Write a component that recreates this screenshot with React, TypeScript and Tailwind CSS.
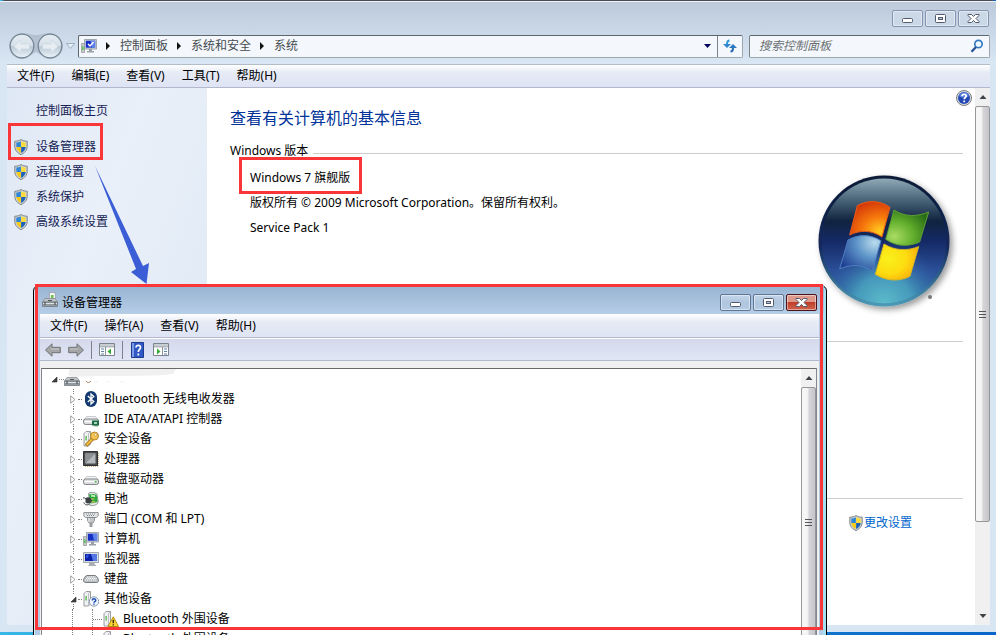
import type { ReactNode } from 'react';

const FONT = "font-['Noto_Sans','Noto_Sans_CJK_SC',sans-serif]";

const MAIN_MENU = ['文件(F)', '编辑(E)', '查看(V)', '工具(T)', '帮助(H)'];
const DEVICE_MENU = ['文件(F)', '操作(A)', '查看(V)', '帮助(H)'];
const CRUMBS = ['控制面板', '系统和安全', '系统'];
const TASKS = ['设备管理器', '远程设置', '系统保护', '高级系统设置'];

/* ---------- Icons ---------- */

function Shield() {
  return (
    <svg viewBox="0 0 14 16" className="w-3.5 h-4 shrink-0" aria-hidden="true">
      <path d="M7 .5C5.500 1.700 3 2.200.8 2.200v5C.8 11.500 3.500 14 7 15.600c3.500-1.600 6.200-4.100 6.200-8.400v-5C11 2.200 8.500 1.700 7 .5z" fill="#cfd3d5" stroke="#7d8488" />
      <path d="M6.900 2.200C5.600 3 4 3.400 2.300 3.500V8h4.600z" fill="#2f86d6" />
      <path d="M7.100 2.200C8.400 3 10 3.400 11.700 3.500V8H7.100z" fill="#fbdc3c" />
      <path d="M2.300 8c.3 2.900 2.100 4.700 4.600 6V8z" fill="#f6c914" />
      <path d="M11.700 8c-.3 2.900-2.100 4.700-4.600 6V8z" fill="#1c62b8" />
    </svg>
  );
}

function ComputerIcon({ check = false }: { check?: boolean }) {
  return (
    <svg viewBox="0 0 16 16" className="w-4 h-4 shrink-0" aria-hidden="true">
      <path d="M.5 5.500h3v9h-3z" fill="#c7cbcf" stroke="#8d9296" strokeWidth=".7" />
      <path d="M1.200 8.500h1.300v3.500H1.200z" fill="#43c336" />
      <path d="M3.500 1.500h12v9.500h-12z" fill="#d4d8dd" stroke="#8e959d" strokeWidth=".8" />
      <path d="M4.800 2.700h9.400v7H4.800z" fill="#1830c4" />
      <path d="M9.500 2.700h4.700v7H11z" fill="#5f84ec" />
      <path d="M8 11h3v2h2v1.500H6V13h2z" fill="#9aa0a6" />
      {check && <path d="M7 6l2 2 3.500-4" fill="none" stroke="#fff" strokeWidth="1.500" />}
    </svg>
  );
}

function MonitorIcon() {
  return (
    <svg viewBox="0 0 16 16" className="w-4 h-4 shrink-0" aria-hidden="true">
      <path d="M.5 1.500h15v10H.5z" fill="#d8dbdf" stroke="#92989e" strokeWidth=".8" />
      <path d="M2 3h12v7H2z" fill="#0b1fa8" />
      <path d="M8 3h6v7h-4z" fill="#5577e6" />
      <path d="M3 3.500h3L5 7H3z" fill="#2d4bd6" />
      <path d="M6 11.500h5l1 2 1.500 1.500H5L6 13.500z" fill="#a9aeb3" />
    </svg>
  );
}

function ToolboxIcon({ card = false }: { card?: boolean }) {
  return (
    <svg viewBox="0 0 16 16" className="w-4 h-4 shrink-0" aria-hidden="true">
      {card && <path d="M7.500.5h5.500l.5 6h-6z" fill="#f6f7f8" stroke="#92979b" strokeWidth=".7" />}
      {card && <path d="M9 3h2.500v3H9z" fill="#6bbf4c" />}
      <path d="M3 6.500h10l2.500 3.500h-15z" fill="#bdc3c7" stroke="#7f868b" strokeWidth=".7" />
      <path d="M.5 10h15v4.500H.5z" fill="#929ba0" stroke="#6b7378" strokeWidth=".7" />
      <path d="M1 11.500h14" stroke="#dfe3e5" />
      <path d="M3 10v3M13 10v3M6 8.500h4" stroke="#4d555a" strokeWidth="1.200" />
    </svg>
  );
}

function BluetoothIcon() {
  return (
    <svg viewBox="0 0 16 16" className="w-4 h-4 shrink-0" aria-hidden="true">
      <rect x="2" y="0" width="12" height="16" rx="6" fill="#12396f" />
      <path d="M4.800 5l6 5.500L8 13V3l2.800 2.500-6 5.500" fill="none" stroke="#fff" strokeWidth="1.300" />
    </svg>
  );
}

function DriveIcon({ card = false }: { card?: boolean }) {
  return (
    <svg viewBox="0 0 16 16" className="w-4 h-4 shrink-0" aria-hidden="true">
      <path d="M3.500 5.500h9L15 9H1z" fill="#f3f4f5" stroke="#b4b8bb" strokeWidth=".7" />
      <rect x=".5" y="8" width="15" height="5.500" rx="2" fill="#dcdee0" stroke="#74797d" strokeWidth=".9" />
      <path d="M2 10.500h9" stroke="#fff" />
      <path d="M12 10h1.500v1.500H12z" fill="#3fbf35" />
      {card && <path d="M9 9.500h7v5h-1.500v1h-1v-1h-1v1h-1v-1H9z" fill="#1f6b45" />}
      {card && <path d="M11 11h3v2h-3z" fill="#a5d8b6" />}
    </svg>
  );
}

function TowerIcon({ children }: { children?: ReactNode }) {
  return (
    <svg viewBox="0 0 16 16" className="w-4 h-4 shrink-0" aria-hidden="true">
      <path d="M1 2.500l2-2h4.500V13l-2 2H1z" fill="#f0f1f2" stroke="#85898d" strokeWidth=".8" />
      <path d="M5.500 2.500V15M5.500 2.500l2-2" stroke="#a5a9ad" strokeWidth=".7" />
      <path d="M2.500 5h1.300v4.500H2.500z" fill="#55b94a" />
      {children}
    </svg>
  );
}

function KeyBadge() {
  return (
    <>
      <path d="M10 7.500L3 14.500" stroke="#9c6c13" strokeWidth="3.500" />
      <path d="M10 7.500L3.500 14" stroke="#f3bd45" strokeWidth="2" />
      <circle cx="11.500" cy="5" r="4" fill="#f6c451" stroke="#a57418" strokeWidth=".8" />
      <circle cx="12.700" cy="3.800" r="1.200" fill="#fff" stroke="#a57418" strokeWidth=".5" />
    </>
  );
}

function QuestionBadge() {
  return (
    <>
      <circle cx="11" cy="10.500" r="4.700" fill="#f3f7fc" stroke="#7c8faa" strokeWidth=".9" />
      <path d="M9.300 9.500c0-2.400 3.600-2.100 3.400.1-.1 1.100-1.700 1.100-1.700 2.100M11 12.500v1.300" fill="none" stroke="#1d4fb0" strokeWidth="1.500" />
    </>
  );
}

function WarningBadge() {
  return (
    <>
      <path d="M10.300 5.800l5.200 9.700H5z" fill="#fbd936" stroke="#b58b09" strokeLinejoin="round" />
      <path d="M10.300 8.800v3.400M10.300 13.200v1.400" stroke="#3f3000" strokeWidth="1.500" />
    </>
  );
}

function ChipIcon() {
  return (
    <svg viewBox="0 0 16 16" className="w-4 h-4 shrink-0" aria-hidden="true">
      <path d="M2 15.300h13M15.300 2v13" stroke="#bfa05a" strokeDasharray="1 1" />
      <path d="M.5.500h14v14H.5z" fill="#4b4d4f" stroke="#2f3133" />
      <path d="M2.500 2.500h10v10h-10z" fill="#b6b9bb" />
      <path d="M2.500 2.500h10l-10 10z" fill="#8d9093" />
    </svg>
  );
}

function BatteryIcon() {
  return (
    <svg viewBox="0 0 16 16" className="w-4 h-4 shrink-0" aria-hidden="true">
      <path d="M5.500 2.500C6 1 12 1 14 3l1.200 8c-.5 3-5 4-8.200 3.500z" fill="#e4e8e5" stroke="#6f7772" strokeWidth=".7" />
      <path d="M6 3.500c3-1 6-.5 7.700.7l1 6.300c-2 1.500-5 2-7.700 1.500z" fill="#2aa83b" />
      <path d="M8 3.800c1.500-.4 3 0 4 .5l.3 2C11 5.500 9.500 5.500 8.200 6z" fill="#c5f0be" />
      <path d="M0 6.800c2 0 2.500 1 3.500 1.500M.8 11.500c1 2.700 3.700 3 5.700 1.500" stroke="#3b3e40" fill="none" />
      <path d="M2.500 7c3-1.500 5.500-.5 6.500 2.500-.5 3-4.500 4-6.500 2z" fill="#3c4042" />
      <path d="M8 8h3.500M8.500 10.800H12" stroke="#e2c368" strokeWidth="1.200" />
    </svg>
  );
}

function PortIcon() {
  return (
    <svg viewBox="0 0 16 16" className="w-4 h-4 shrink-0" aria-hidden="true">
      <path d="M.8 1.500h14.400v3.500L13.500 6.500h-11L.8 5z" fill="#e1e3e4" stroke="#7c8083" strokeWidth=".8" />
      <path d="M3 3h10M4 4.500h8" stroke="#85898c" strokeDasharray="1 1" />
      <path d="M4.500 6.500h7v3L10 12H6L4.500 9.500z" fill="#c3c7c9" stroke="#7c8083" strokeWidth=".8" />
      <path d="M6.500 12h3v4h-3z" fill="#989da0" />
      <path d="M6 7v4" stroke="#eceeef" />
    </svg>
  );
}

function KeyboardIcon() {
  return (
    <svg viewBox="0 0 16 16" className="w-4 h-4 shrink-0" aria-hidden="true">
      <path d="M4 4.500h8c2 .5 3.500 3.500 3.500 5s-1 2-2 2h-11c-1 0-2-.5-2-2s1.500-4.500 3.500-5z" fill="#b9bdc0" stroke="#6c7073" strokeWidth=".9" />
      <path d="M4 6h8.500M3 7.500h10.500M2 9h12" stroke="#fff" strokeDasharray="1.200 .8" />
    </svg>
  );
}

function WindowsLogo() {
  return (
    <svg viewBox="0 0 140 140" className="w-[140px] h-[140px] shrink-0 overflow-visible" role="img" aria-label="Windows">
      <defs>
        <linearGradient id="orb" x1="0" y1="0" x2="0" y2="1">
          <stop offset="0" stopColor="#8fa9b6" />
          <stop offset=".15" stopColor="#516d80" />
          <stop offset=".34" stopColor="#10233f" />
          <stop offset=".5" stopColor="#142a66" />
          <stop offset=".75" stopColor="#2c519b" />
          <stop offset="1" stopColor="#2f78a8" />
        </linearGradient>
        <radialGradient id="orbGlow" cx=".5" cy="1" r=".5">
          <stop offset="0" stopColor="#5dbccb" />
          <stop offset=".45" stopColor="#4aa3c0" stopOpacity=".85" />
          <stop offset="1" stopColor="#2c569f" stopOpacity="0" />
        </radialGradient>
        <linearGradient id="orbRim" x1="0" y1="0" x2="0" y2="1">
          <stop offset="0" stopColor="#0b1a36" />
          <stop offset=".55" stopColor="#14295b" />
          <stop offset="1" stopColor="#4e9cb8" />
        </linearGradient>
        <radialGradient id="flagRed" cx=".75" cy=".85" r=".95">
          <stop offset="0" stopColor="#ffcf1f" />
          <stop offset=".45" stopColor="#f6780c" />
          <stop offset="1" stopColor="#d02f08" />
        </radialGradient>
        <radialGradient id="flagGreen" cx=".2" cy=".75" r=".9">
          <stop offset="0" stopColor="#a9dc63" />
          <stop offset=".5" stopColor="#62ae2c" />
          <stop offset="1" stopColor="#286c16" />
        </radialGradient>
        <radialGradient id="flagBlue" cx=".85" cy=".2" r="1">
          <stop offset="0" stopColor="#b9dcec" />
          <stop offset=".45" stopColor="#5c93c8" />
          <stop offset="1" stopColor="#1e3d91" />
        </radialGradient>
        <radialGradient id="flagYellow" cx=".3" cy=".4" r=".85">
          <stop offset="0" stopColor="#f9f01c" />
          <stop offset=".5" stopColor="#fddc10" />
          <stop offset="1" stopColor="#f79c0b" />
        </radialGradient>
        <filter id="orbShadow" x="-20%" y="-20%" width="150%" height="150%">
          <feDropShadow dx="3" dy="3" stdDeviation="3" floodColor="#000" floodOpacity=".4" />
        </filter>
      </defs>
      <circle cx="70" cy="70" r="65.500" fill="url(#orbRim)" filter="url(#orbShadow)" />
      <circle cx="70" cy="70" r="62.500" fill="url(#orb)" />
      <circle cx="70" cy="70" r="62.500" fill="url(#orbGlow)" />
      <g transform="translate(-24 -21) scale(.3333)" strokeWidth="3">
        <path d="M202 167c28-16 66-18 98 5l-24 89c-34-22-66-21-97-6z" fill="url(#flagRed)" stroke="#e85a1a" />
        <path d="M312 180c34 22 70 20 104 6l-27 90c-36 15-70 14-102-8z" fill="url(#flagGreen)" stroke="#5e9f35" />
        <path d="M174 270c32-18 66-18 99 2l-26 91c-32-20-64-21-98-6z" fill="url(#flagBlue)" stroke="#4d7dc0" />
        <path d="M282 282c32 20 68 22 104 8l-26 89c-34 17-72 14-104-6z" fill="url(#flagYellow)" stroke="#d9b81d" />
      </g>
      <circle cx="116" cy="126" r="2" fill="#777" />
    </svg>
  );
}

/* ---------- Window chrome ---------- */

function CaptionButtons({ danger = false }: { danger?: boolean }) {
  const base = 'w-[31px] h-[17px] rounded-[2px] border flex items-center justify-center shadow-[inset_0_0_0_1px_rgba(255,255,255,0.45)]';
  const calm = danger
    ? 'border-[#5f7596] bg-linear-to-b from-[#c3d5e9] via-[#b0c6df] to-[#b5cbe3]'
    : 'border-[#8593b0] bg-linear-to-b from-[#cdd9e7] to-[#c9d7e6]';
  const close = danger
    ? 'border-[#4c1119] bg-linear-to-b from-[#dd9a8c] from-45% via-[#bf3d29] via-50% to-[#d0644d]'
    : calm;
  return (
    <div className="flex gap-[2px]">
      <button type="button" aria-label="最小化" className={`${base} ${calm}`}>
        <svg viewBox="0 0 13 11" className="w-[13px] h-[11px]"><rect x="1.500" y="5.500" width="10" height="4" rx="1" fill="#fff" stroke="#545a6d" /></svg>
      </button>
      <button type="button" aria-label="最大化" className={`${base} ${calm}`}>
        <svg viewBox="0 0 13 11" className="w-[13px] h-[11px]">
          <rect x="1.500" y="1.500" width="10" height="8" rx="1" fill="#fff" stroke="#545a6d" />
          <rect x="4.500" y="4.500" width="4" height="2" fill="#b9c9dc" stroke="#545a6d" />
        </svg>
      </button>
      <button type="button" aria-label="关闭" className={`${base} ${close}`}>
        <svg viewBox="0 0 13 11" className="w-[13px] h-[11px]">
          <path d="M1 1.500h3.500l2 2 2-2H12v1L9 5.500l3 3v1H8.500l-2-2-2 2H1v-1l3-3-3-3z" fill="#fff" stroke="#545a6d" strokeLinejoin="round" />
        </svg>
      </button>
    </div>
  );
}

function MenuBar({ items, className }: { items: string[]; className: string }) {
  return (
    <nav className={`flex items-center gap-[17px] px-2.5 border-b border-[#b3b8cc] bg-linear-to-b from-white via-[#e6ebf5] via-34% to-[#dfe4f5] ${className}`}>
      {items.map((item) => (
        <button key={item} type="button" className="whitespace-nowrap">{item}</button>
      ))}
    </nav>
  );
}

function ScrollArrow({ down = false }: { down?: boolean }) {
  return (
    <button type="button" aria-label={down ? '向下滚动' : '向上滚动'} className="h-[18px] shrink-0 flex items-center justify-center">
      <svg viewBox="0 0 8 4" className="w-2 h-1"><path d={down ? 'M.5 0h7L4 4z' : 'M.5 4h7L4 0z'} fill="#3e4347" /></svg>
    </button>
  );
}

function ScrollThumb({ className }: { className: string }) {
  return (
    <div className={`border border-[#979797] rounded-[2px] bg-linear-to-r from-[#f6f6f6] from-40% via-[#d6d6d9] via-55% to-[#c4c4ca] flex flex-col items-center justify-center gap-[2px] ${className}`}>
      <span className="w-[7px] h-px bg-[#555]" />
      <span className="w-[7px] h-px bg-[#555]" />
      <span className="w-[7px] h-px bg-[#555]" />
    </div>
  );
}

/* ---------- Main window ---------- */

function NavButtons() {
  return (
    <div className="relative flex items-center gap-1 w-[54px] h-[26px]">
      <svg viewBox="0 0 54 26" className="absolute inset-0 w-[54px] h-[26px]" aria-hidden="true">
        <defs>
          <linearGradient id="navDisc" x1="0" y1="0" x2="0" y2="1">
            <stop offset="0" stopColor="#e6edf3" />
            <stop offset=".48" stopColor="#d6e0e8" />
            <stop offset=".52" stopColor="#bccad6" />
            <stop offset="1" stopColor="#e9f2f8" />
          </linearGradient>
        </defs>
        <path d="M13 0c5 0 9 2 14 2s9-2 14-2c7 0 13 6 13 13s-6 13-13 13c-6 0-9-5-14-7-5 2-8 7-14 7C6 26 0 20 0 13S6 0 13 0z" fill="#b4c2cf" />
        <circle cx="13" cy="13" r="11.800" fill="url(#navDisc)" stroke="#738394" strokeWidth="1.200" />
        <circle cx="41" cy="13" r="11.800" fill="url(#navDisc)" stroke="#738394" strokeWidth="1.200" />
        <path d="M5 13.500l7-6.500v4h8.500v5H12v4z" fill="#e6edf3" stroke="#ccd7e0" strokeWidth=".7" />
        <path d="M49 13.500L42 7v4h-8.500v5H42v4z" fill="#e6edf3" stroke="#ccd7e0" strokeWidth=".7" />
      </svg>
      <button type="button" aria-label="后退" className="relative w-[25px] h-[25px] rounded-full" />
      <button type="button" aria-label="前进" className="relative w-[25px] h-[25px] rounded-full" />
    </div>
  );
}

function AddressRow() {
  return (
    <div className="flex items-center pl-[9px] pr-[6px] h-[24px]">
      <NavButtons />
      <button type="button" aria-label="最近的页面" className="w-[15px] flex justify-center">
        <svg viewBox="0 0 9 6" className="w-[9px] h-[6px]"><path d="M.5.500h8l-4 5z" fill="#e8eff6" stroke="#9fb0c2" /></svg>
      </button>
      <div className="flex-1 min-w-0 flex h-[23px] rounded-[2px] border border-[#9fa7ae] border-t-[#5d666d] border-l-[#5d666d] bg-[#f4f8fc] text-[#454b50]">
        <div className="flex-1 min-w-0 flex items-center pl-[2px]">
          <ComputerIcon check />
          {CRUMBS.map((crumb) => (
            <span key={crumb} className="flex items-center">
              <svg viewBox="0 0 4 8" className="w-1 h-2 ml-2.5 mr-2.5 first:ml-[9px]"><path d="M0 0l4 4-4 4z" fill="#111" /></svg>
              <a href="#" className="whitespace-nowrap">{crumb}</a>
            </span>
          ))}
        </div>
        <button type="button" aria-label="历史位置" className="w-[20px] flex items-center justify-center">
          <svg viewBox="0 0 7 4" className="w-[7px] h-1"><path d="M0 0h7L3.500 4z" fill="#00005c" /></svg>
        </button>
        <button type="button" aria-label="刷新" className="w-[25px] border-l border-[#7b8288] flex items-center justify-center">
          <svg viewBox="0 0 14 14" className="w-3.5 h-3.5">
            <path d="M6.500 1.500C4.500 1.500 4 3 4 5" fill="none" stroke="#2f98d8" strokeWidth="2" />
            <path d="M0 5h8L4 9z" fill="#2f86d0" />
            <path d="M7.500 12.500c2 0 2.500-1.500 2.500-3.500" fill="none" stroke="#2667ae" strokeWidth="2" />
            <path d="M6 9h8l-4-4z" fill="#2b78c2" />
          </svg>
        </button>
      </div>
      <label className="ml-[6px] w-[241px] flex items-center h-[23px] rounded-[2px] border border-[#9fa7ae] border-t-[#5d666d] border-l-[#7b8288] bg-[#f4f8fc] pl-[9px] pr-[5px]">
        <input type="text" aria-label="搜索控制面板" placeholder="搜索控制面板" className="flex-1 min-w-0 bg-transparent italic outline-none placeholder:text-[#6a6f73]" />
        <svg viewBox="0 0 14 14" className="w-3.5 h-3.5">
          <circle cx="8.500" cy="5" r="3.700" fill="#eef8fd" stroke="#3579c0" strokeWidth="1.700" />
          <path d="M6 8l-4.500 4.800" stroke="#284f95" strokeWidth="2.200" />
        </svg>
      </label>
    </div>
  );
}

function Sidebar() {
  return (
    <aside className="w-[200px] shrink-0 pt-[13px] bg-linear-to-br from-[#dfe8f5] via-[#eaf0f9] via-35% to-[#d9e5f3] text-[#151c55]">
      <a href="#" className="block ml-[29px] leading-5">控制面板主页</a>
      <ul className="mt-[13px]">
        {TASKS.map((task) => (
          <li key={task} className="h-[25px] pl-[7px] flex items-center">
            <a href="#" className="flex items-center gap-2"><Shield />{task}</a>
          </li>
        ))}
      </ul>
    </aside>
  );
}

function SystemInfo() {
  return (
    <main className="flex-1 min-w-0 bg-white pl-[23px] pr-3 overflow-hidden">
      <div className="flex items-start justify-between pt-[2px]">
        <h1 className="mt-4 text-base leading-6 text-[#003399]">查看有关计算机的基本信息</h1>
        <button type="button" aria-label="帮助" className="-mr-[9px]">
          <svg viewBox="0 0 16 16" className="w-4 h-4">
            <circle cx="8" cy="8" r="7.500" fill="#dadcde" stroke="#7a7d80" />
            <circle cx="8" cy="8" r="6" fill="#2348b4" />
            <path d="M3 6a5.300 5.300 0 0110 0c-3 2-7 2-10 0z" fill="#5a83dc" />
            <path d="M6 6.300c0-2.900 4.300-2.500 4.200-.2C10.200 7.500 8.200 7.500 8.200 9.300M8.200 10.600v1.700" fill="none" stroke="#fff" strokeWidth="1.700" />
          </svg>
        </button>
      </div>
      <section>
        <div className="mt-[11px] flex items-center gap-[5px] leading-5">
          <h2 className="whitespace-nowrap">Windows 版本</h2>
          <span className="flex-1 mt-1 h-px bg-[#cccccc]" />
        </div>
        <div className="flex justify-between items-start pl-5 pr-[9px]">
          <div className="mt-1 leading-[25px]">
            <p>Windows 7 旗舰版</p>
            <p>版权所有 © 2009 Microsoft Corporation。保留所有权利。</p>
            <p>Service Pack 1</p>
          </div>
          <div className="mt-[10px]"><WindowsLogo /></div>
        </div>
      </section>
      <section className="mt-[30px] border-t border-[#cccccc] h-[157px]" />
      <section className="border-t border-[#cccccc] pt-[14px] pr-[51px] flex justify-end">
        <a href="#" className="flex items-center gap-px leading-5 text-[#0066cc]"><Shield />更改设置</a>
      </section>
    </main>
  );
}

/* ---------- Device manager ---------- */

const DEVICES: { name: string; icon: ReactNode; open?: boolean; children?: string[] }[] = [
  { name: 'Bluetooth 无线电收发器', icon: <BluetoothIcon /> },
  { name: 'IDE ATA/ATAPI 控制器', icon: <DriveIcon card /> },
  { name: '安全设备', icon: <TowerIcon><KeyBadge /></TowerIcon> },
  { name: '处理器', icon: <ChipIcon /> },
  { name: '磁盘驱动器', icon: <DriveIcon /> },
  { name: '电池', icon: <BatteryIcon /> },
  { name: '端口 (COM 和 LPT)', icon: <PortIcon /> },
  { name: '计算机', icon: <ComputerIcon /> },
  { name: '监视器', icon: <MonitorIcon /> },
  { name: '键盘', icon: <KeyboardIcon /> },
  {
    name: '其他设备',
    icon: <TowerIcon><QuestionBadge /></TowerIcon>,
    open: true,
    children: ['Bluetooth 外围设备', 'Bluetooth 外围设备'],
  },
];

function Expander({ open = false }: { open?: boolean }) {
  return (
    <button type="button" aria-label={open ? '折叠' : '展开'} className="w-[10px] h-[10px] flex items-center justify-center">
      {open ? (
        <svg viewBox="0 0 7 7" className="w-[7px] h-[7px]"><path d="M6 1v5H1z" fill="#404040" stroke="#262626" strokeWidth=".6" /></svg>
      ) : (
        <svg viewBox="0 0 6 9" className="w-[6px] h-[9px]"><path d="M.7.800l4.300 3.700L.7 8.200z" fill="#fff" stroke="#a0a0a0" /></svg>
      )}
    </button>
  );
}

function DeviceTree() {
  return (
    <ul className="flex-1 min-w-0">
      <li className="h-5 flex items-center pl-[7px]">
        <Expander open />
        <span className="w-[5px] border-t border-dotted border-[#808080]" />
        <div className="relative flex items-center">
          <ToolboxIcon />
          {/* computer name is wiped out */}
          <svg viewBox="0 0 116 20" className="absolute left-0 -top-[2px] w-[116px] h-5" aria-hidden="true">
            <path d="M6 0h106l-3 5c-20 3-75 1-101 3-4 0-4-4-2-8z" fill="#f0f0f0" />
            <path d="M22 12c1 2 4 2 5 0" fill="none" stroke="#a98a72" />
            <path d="M30 13h4M42 13h3M56 13h4" stroke="#f2eeee" />
          </svg>
        </div>
      </li>
      {DEVICES.map((device) => (
        <li key={device.name}>
          <div className="h-5 flex items-center pl-[26px]">
            <span className="self-stretch w-[10px] flex flex-col items-center">
              <span className="flex-1 border-l border-dotted border-[#808080]" />
              <Expander open={device.open} />
              <span className="flex-1 border-l border-dotted border-[#808080]" />
            </span>
            <span className="w-[4px] mr-px border-t border-dotted border-[#808080]" />
            {device.icon}
            <span className="ml-[5px] whitespace-nowrap">{device.name}</span>
          </div>
          {device.children?.map((child, i) => (
            <div key={i} className="h-5 flex items-center pl-[30px]">
              <span className="self-stretch w-[20px] border-l border-dotted border-[#808080]" />
              <span className="self-stretch border-l border-dotted border-[#808080]" />
              <span className="w-[9px] mr-px border-t border-dotted border-[#808080]" />
              <TowerIcon><WarningBadge /></TowerIcon>
              <span className="ml-1 whitespace-nowrap">{child}</span>
            </div>
          ))}
        </li>
      ))}
    </ul>
  );
}

function PaneIcon({ right = false }: { right?: boolean }) {
  return (
    <svg viewBox="0 0 16 13" className="w-4 h-[13px]" aria-hidden="true">
      <path d="M.5.500h15v12H.5z" fill="#fff" stroke="#7b838b" />
      <path d="M1 2h14" stroke="#c7cdd3" strokeWidth="2" />
      <path d="M1 3.800h14" stroke="#8b939b" />
      <path d={right ? 'M9.500 4v8' : 'M6.500 4v8'} stroke="#8b939b" />
      <path d={right ? 'M11 6h3M11 8.500h3M11 11h3' : 'M2 6h3M2 8.500h3M2 11h3'} stroke="#5a7fa8" />
      <path d={right ? 'M4 5.500v6L7.500 8.500z' : 'M12 5.500v6L8.500 8.500z'} fill="#38a832" />
    </svg>
  );
}

function ToolArrow({ forward = false }: { forward?: boolean }) {
  return (
    <svg viewBox="0 0 16 14" className="w-4 h-3.5" aria-hidden="true">
      <path
        d={forward ? 'M15.500 7L9 .8v3.500H.7v5.400H9v3.500z' : 'M.5 7L7 .8v3.500h8.300v5.400H7v3.500z'}
        fill="#a3a5a7"
        stroke="#707274"
        strokeLinejoin="round"
      />
      <path d={forward ? 'M2 6h8' : 'M6 6h8'} stroke="#c4c6c8" />
    </svg>
  );
}

function DeviceManager() {
  return (
    <section className="absolute left-[33px] right-[169px] top-[285px] -bottom-[60px] flex flex-col rounded-t-[6px] border border-black bg-[#b3cbe4] pl-[6px] pr-[7px] shadow-[inset_-3px_0_0_#a5dff2,inset_1px_0_0_#d8e8f4]">
      <header className="h-[28px] shrink-0 -mx-[5px] pl-[7px] pr-[7px] flex items-center gap-1 bg-linear-to-b from-[#98b4d2] to-[#b6cde6]">
        <ToolboxIcon card />
        <h2 className="flex-1 mt-[6px] leading-5">设备管理器</h2>
        <div className="mt-1"><CaptionButtons danger /></div>
      </header>
      <MenuBar items={DEVICE_MENU} className="h-[24px] shrink-0" />
      <div className="h-[23px] shrink-0 flex items-center pl-[5px] border-t border-t-white border-b border-b-[#b3b8cc] bg-linear-to-b from-[#d3d8ec] to-[#e1e6f6]">
        <button type="button" aria-label="后退"><ToolArrow /></button>
        <button type="button" aria-label="前进" className="ml-[7px]"><ToolArrow forward /></button>
        <span className="w-px h-[18px] mx-[7px] bg-[#7d818c]" />
        <button type="button" aria-label="显示/隐藏控制台树"><PaneIcon /></button>
        <span className="w-px h-[18px] ml-[7px] mr-2 bg-[#7d818c]" />
        <button type="button" aria-label="帮助">
          <svg viewBox="0 0 13 16" className="w-[13px] h-4">
            <path d="M.5.500h12v15H.5z" fill="#3159c6" stroke="#1d3a91" />
            <path d="M1 1h2v14H1z" fill="#7d9ce6" />
            <path d="M5 5.500c0-3 4.500-2.700 4.500 0C9.500 7.500 7.300 7.500 7.300 10M7.300 11.500v2" fill="none" stroke="#fff" strokeWidth="1.700" />
          </svg>
        </button>
        <button type="button" aria-label="显示操作窗格" className="ml-[9px]"><PaneIcon right /></button>
      </div>
      <div className="flex-1 min-h-0 flex flex-col bg-[#f0f0f0] pt-[7px] pl-px pr-[2px]">
        <div className="flex-1 min-h-0 flex border border-[#828790] border-t-[#696969] bg-white">
          <DeviceTree />
          <div className="w-[15px] shrink-0 flex flex-col bg-[#f0f0f0]">
            <ScrollArrow />
            <ScrollThumb className="h-[270px] shrink-0" />
          </div>
        </div>
      </div>
    </section>
  );
}

export default function App() {
  return (
    <div className={`relative h-screen overflow-hidden flex flex-col text-xs text-black bg-linear-to-r from-[#37b5e6] to-[#0a66c8] ${FONT}`}>
      <div className="flex-1 min-h-0 mb-[3px] flex flex-col rounded-t-[5px] border-t border-[#4b4b55] bg-[#d8e5f3]">
        <header className="shrink-0 border-t border-[#eef3f8] pb-[6px] bg-linear-to-b from-[#bdcadb] to-[#d9e6f4]">
          <div className="h-[32px] pt-2 pr-[7px] flex justify-end"><CaptionButtons /></div>
          <AddressRow />
        </header>
        <div className="flex-1 min-h-0 flex flex-col mx-[7px] mr-[6px] mb-[7px]">
          <MenuBar items={MAIN_MENU} className="h-[24px] shrink-0 border-t border-t-[#b3bdca]" />
          <div className="flex-1 min-h-0 flex">
            <Sidebar />
            <SystemInfo />
            <div className="w-[15px] shrink-0 flex flex-col bg-[#f0f0f0]">
              <ScrollArrow />
              <ScrollThumb className="flex-[83]" />
              <div className="flex-[17]" />
              <ScrollArrow down />
            </div>
          </div>
        </div>
      </div>

      <DeviceManager />

      {/* Callouts */}
      <div className="absolute left-[8px] top-[123px] w-[95px] h-[37px] border-3 border-[#fb3638]" />
      <div className="absolute left-[239px] top-[157px] w-[123px] h-[37px] border-3 border-[#fb3638]" />
      <div className="absolute left-[35px] right-[173px] top-[284px] bottom-[5px] border-3 border-[#fb3638] pointer-events-none" />
      <svg viewBox="0 0 60 122" className="absolute left-[92px] top-[164px] w-[60px] h-[122px]" aria-hidden="true">
        <path d="M3 2L44 105l-5 3 15.500 12L57 99l-6 3z" fill="#3b5ed6" />
      </svg>
    </div>
  );
}
